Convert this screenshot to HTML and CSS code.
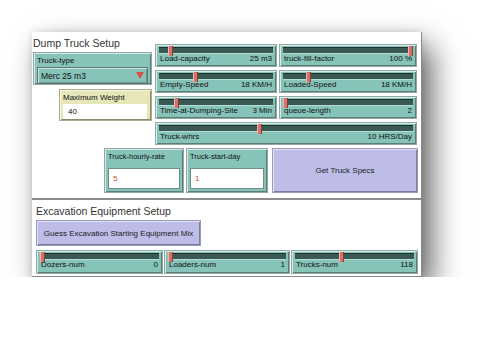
FILE: index.html
```html
<!DOCTYPE html>
<html lang="en">
<head>
    <meta charset="UTF-8">
    <title>Dump Truck Setup</title>
    <link rel="stylesheet" href="styles.css">
</head>
<body>
    <div class="panel">
        <div class="setup">
            <div class="side">
                <h2 class="heading">Dump Truck Setup</h2>
                <div class="chooser">
                    <div class="label">Truck-type</div>
                    <div class="select"><span>Merc 25 m3</span><span class="arrow"></span></div>
                </div>
                <div class="monitor">
                    <div class="label">Maximum Weight</div>
                    <div class="field">40</div>
                </div>
            </div>

            <div class="sliders">
                <div class="slider">
                    <div class="track"><span class="knob" style="left: 9px"></span></div>
                    <div class="caption"><span>Load-capacity</span><span>25 m3</span></div>
                </div>
                <div class="slider">
                    <div class="track"><span class="knob" style="left: 125px"></span></div>
                    <div class="caption"><span>truck-fill-factor</span><span>100 %</span></div>
                </div>
                <div class="slider">
                    <div class="track"><span class="knob" style="left: 34px"></span></div>
                    <div class="caption"><span>Empty-Speed</span><span>18 KM/H</span></div>
                </div>
                <div class="slider">
                    <div class="track"><span class="knob" style="left: 23px"></span></div>
                    <div class="caption"><span>Loaded-Speed</span><span>18 KM/H</span></div>
                </div>
                <div class="slider">
                    <div class="track"><span class="knob" style="left: 15px"></span></div>
                    <div class="caption"><span>Time-at-Dumping-Site</span><span>3 Min</span></div>
                </div>
                <div class="slider">
                    <div class="track"><span class="knob" style="left: 0px"></span></div>
                    <div class="caption"><span>queue-length</span><span>2</span></div>
                </div>
                <div class="slider wide">
                    <div class="track"><span class="knob" style="left: 98px"></span></div>
                    <div class="caption"><span>Truck-whrs</span><span>10 HRS/Day</span></div>
                </div>
            </div>
        </div>

        <div class="inputs">
            <div class="input rate">
                <div class="label small">Truck-hourly-rate</div>
                <div class="box">5</div>
            </div>
            <div class="input day">
                <div class="label small">Truck-start-day</div>
                <div class="box">1</div>
            </div>
            <button class="btn specs">Get Truck Specs</button>
        </div>

        <div class="divider"></div>

        <h2 class="heading lower">Excavation Equipment Setup</h2>
        <button class="btn guess">Guess Excavation Starting Equipment Mix</button>

        <div class="equip">
            <div class="slider">
                <div class="track"><span class="knob" style="left: 0px"></span></div>
                <div class="caption"><span>Dozers-num</span><span>0</span></div>
            </div>
            <div class="slider">
                <div class="track"><span class="knob" style="left: 0px"></span></div>
                <div class="caption"><span>Loaders-num</span><span>1</span></div>
            </div>
            <div class="slider">
                <div class="track"><span class="knob" style="left: 44px"></span></div>
                <div class="caption"><span>Trucks-num</span><span>118</span></div>
            </div>
        </div>
    </div>
</body>
</html>
```

FILE: styles.css
```css
body, html {
    margin: 0;
    padding: 0;
    background-color: #fff;
    font-family: "Liberation Sans", Arial, sans-serif;
    color: #111;
}

.panel {
    box-sizing: border-box;
    width: 390px;
    height: 245px;
    margin: 32px 0 0 32px;
    background-color: #fff;
    border-right: 1px solid #8a8a8a;
    border-bottom: 1px solid #8a8a8a;
    box-shadow: 10px 14px 28px rgba(0, 0, 0, .6), 0 0 8px rgba(0, 0, 0, .12);
}

.heading {
    box-sizing: border-box;
    height: 20px;
    margin: 0;
    padding-top: 4px;
    font-size: 10.5px;
    line-height: 14px;
    font-weight: normal;
    color: #333;
}

.heading.lower {
    height: 15px;
    padding: 0 0 0 4px;
    margin-top: 4px;
}

.label {
    font-size: 8px;
    line-height: 11px;
    white-space: nowrap;
}

.label.small {
    font-size: 7.5px;
}

/* top section */

.setup {
    display: grid;
    grid-template-columns: 120px 262px;
    column-gap: 3px;
}

.side {
    padding-left: 1px;
}

.chooser, .slider, .input {
    box-sizing: border-box;
    background-color: #86c3b8;
    border: 1px solid #93a8a3;
    box-shadow: inset 1px 1px 0 #d4ece7, inset -1px -1px 0 #5b7d76;
}

.chooser {
    width: 119px;
    height: 33px;
    padding: 2px 3px 0 3px;
}

.select {
    box-sizing: border-box;
    display: flex;
    justify-content: space-between;
    align-items: center;
    height: 17px;
    margin-top: 1px;
    padding: 0 3px;
    font-size: 8.5px;
    border: 1px solid #5d7a74;
    box-shadow: inset 1px 1px 0 #c9e6e0, inset -1px -1px 0 #6f948c;
}

.arrow {
    width: 0;
    height: 0;
    border-left: 4px solid transparent;
    border-right: 4px solid transparent;
    border-top: 7px solid #d4524b;
}

.monitor {
    box-sizing: border-box;
    width: 93px;
    height: 32px;
    margin: 4px 0 0 26px;
    padding: 2px 4px 0 3px;
    background-color: #e6e6b9;
    border: 1px solid #a9a98c;
    box-shadow: inset 1px 1px 0 #f7f7e4, inset -1px -1px 0 #8c8c6e;
}

.field {
    box-sizing: border-box;
    height: 15px;
    margin-top: 1px;
    padding-left: 5px;
    font-size: 8px;
    line-height: 15px;
    background-color: #fff;
}

.sliders {
    display: grid;
    grid-template-columns: 122px 138px;
    gap: 3px 2px;
    margin-top: 12px;
}

.slider {
    height: 23px;
    padding: 2px 3px 0 3px;
}

.slider.wide {
    grid-column: 1 / 3;
}

.track {
    position: relative;
    height: 5px;
    background-color: #3b5953;
    border-top: 1px solid #1d302c;
    border-bottom: 1px solid #b5ddd5;
}

.knob {
    position: absolute;
    top: -2px;
    width: 5px;
    height: 10px;
    background-color: #d8716b;
    border-left: 1px solid #f3b4af;
    border-right: 1px solid #8a3a36;
    box-sizing: border-box;
}

.caption {
    display: flex;
    justify-content: space-between;
    padding: 0 1px;
    font-size: 8px;
    line-height: 10px;
    white-space: nowrap;
}

/* input row */

.inputs {
    display: flex;
    margin: 3px 0 0 72px;
}

.input {
    height: 45px;
    padding: 2px 3px 0 3px;
}

.input.rate {
    width: 80px;
}

.input.day {
    width: 82px;
    margin-left: 2px;
}

.box {
    box-sizing: border-box;
    height: 21px;
    margin-top: 6px;
    padding-left: 4px;
    font-size: 8px;
    line-height: 20px;
    color: #b4532a;
    background-color: #fff;
    border: 1px solid #6f8d87;
}

.btn {
    box-sizing: border-box;
    padding: 0;
    font-family: inherit;
    font-size: 8px;
    color: #222;
    background-color: #bdbde8;
    border: 1px solid #9a9ab4;
    box-shadow: inset 1px 1px 0 #e2e2f6, inset -1px -1px 0 #7c7c9c;
}

.btn.specs {
    width: 146px;
    height: 45px;
    margin-left: 4px;
}

.divider {
    height: 0;
    margin-top: 5px;
    border-top: 2px solid #8c8c8c;
}

.btn.guess {
    display: block;
    width: 165px;
    height: 26px;
    margin: 1px 0 0 4px;
}

.equip {
    display: grid;
    grid-template-columns: 127px 126px 127px;
    gap: 1px;
    margin: 4px 0 0 4px;
}

.equip .slider {
    height: 24px;
}
```
